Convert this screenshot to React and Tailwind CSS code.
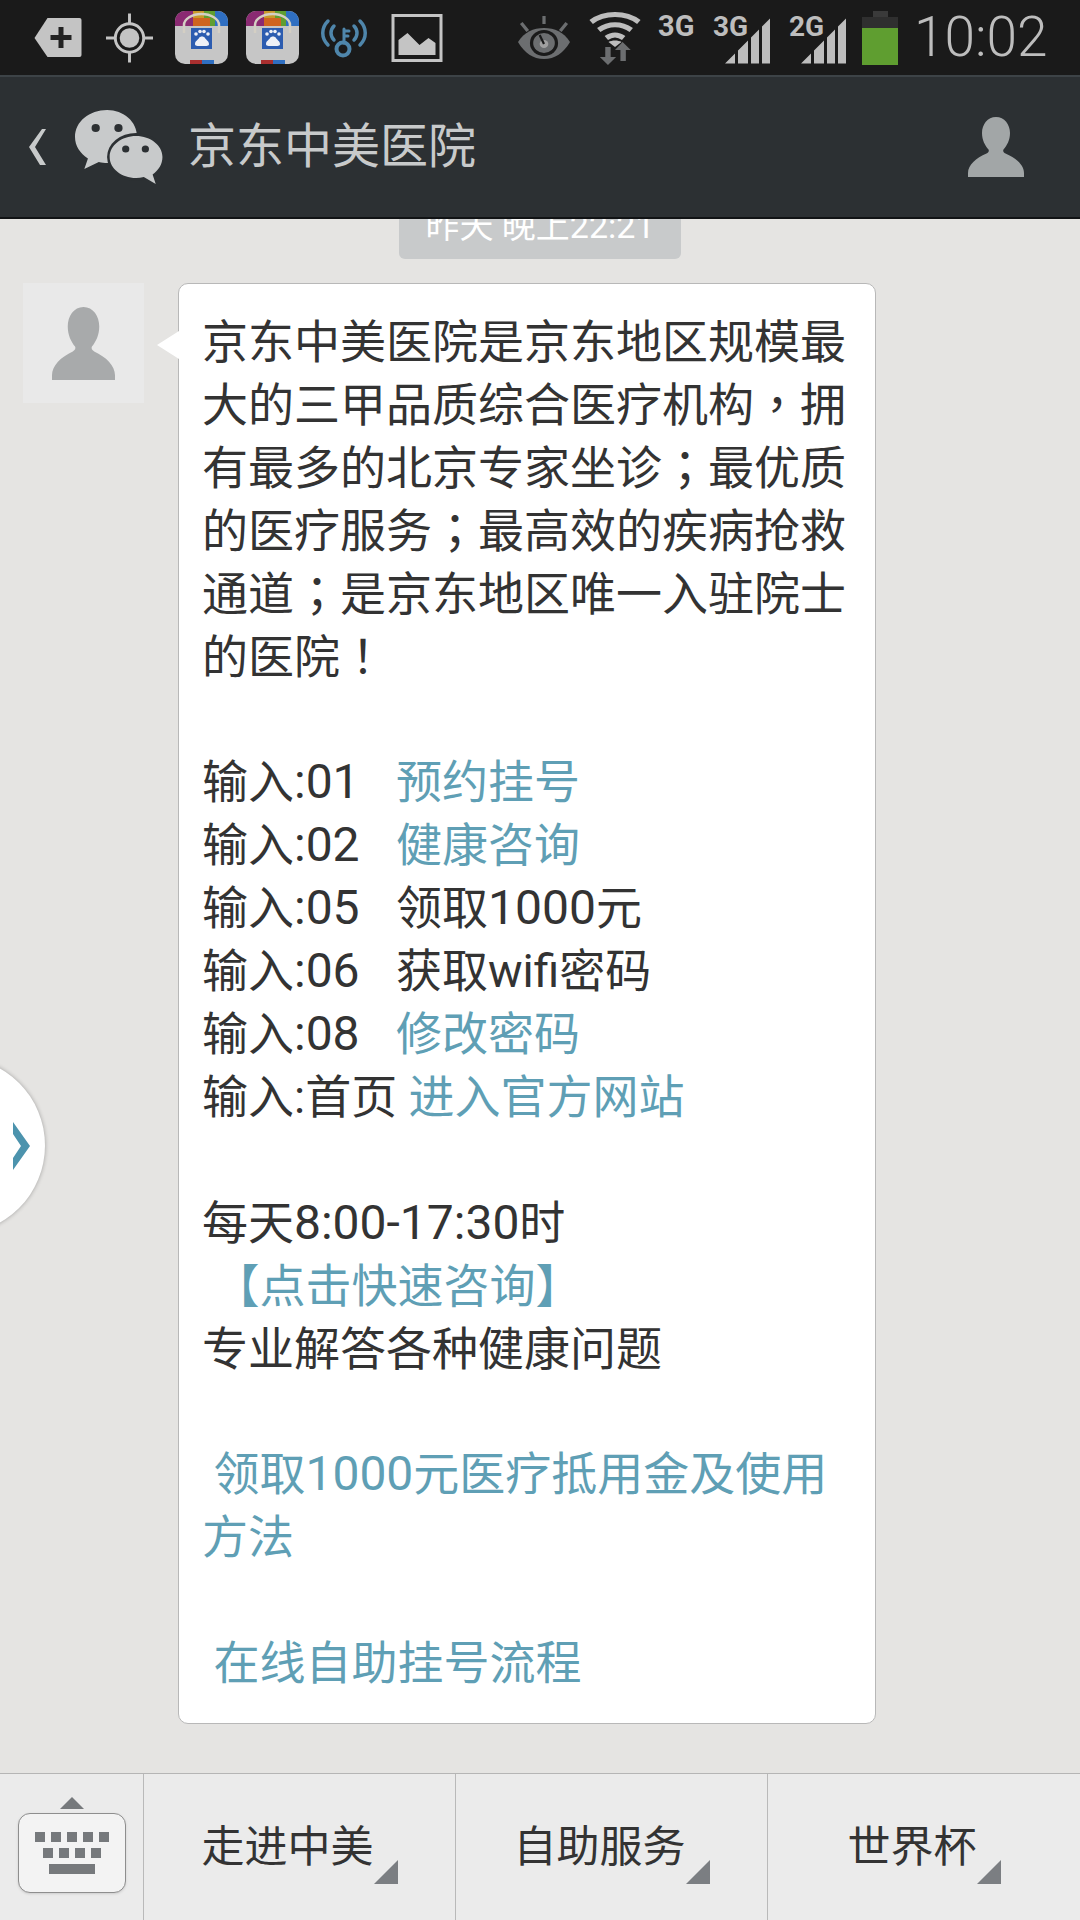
import React from 'react';

const PersonIcon = ({ className, fill }) => (
  <svg viewBox="0 0 56 60" preserveAspectRatio="none" className={className}>
    <path
      fill={fill}
      d="M28 0c8.500 0 14 7.500 14 16 0 7-3 12.500-6.500 16.500-.8 1.500 0 3 2 4C48 41 56 48 56 56v4H0v-4c0-8 8-15 18.500-19.500 2-1 2.800-2.500 2-4C17 28.500 14 23 14 16 14 7.500 19.500 0 28 0z"
    />
  </svg>
);

const WeChatLogo = () => (
  <svg viewBox="0 0 86 74" preserveAspectRatio="none" className="w-[89px] h-[74px] ml-[28px]">
    <path fill="#c8cacb" d="M31 0C14 0 0 11.500 0 27c0 9 5 16.500 12.500 21.500L9 59l14-7c3 .8 5.500 1 8 1 2 0 3 0 5-.5C53 50 60 38 60 27 60 11.500 47 0 31 0z" />
    <ellipse cx="59" cy="47" rx="28" ry="24" fill="#2c3033" />
    <path fill="#c8cacb" d="M59 26c-14 0-25.500 9.500-25.500 21S45 68 59 68c2.500 0 5-.4 7.500-1L78 74l-3-9.500C81 60 84.500 54 84.500 47 84.500 35.500 73 26 59 26z" />
    <circle cx="20" cy="18" r="4" fill="#2c3033" />
    <circle cx="42" cy="18" r="4" fill="#2c3033" />
    <circle cx="49" cy="39" r="3.500" fill="#2c3033" />
    <circle cx="68" cy="39" r="3.500" fill="#2c3033" />
  </svg>
);

const BaiduBag = ({ className }) => (
  <svg viewBox="0 0 53 53" className={className}>
    <rect width="53" height="53" rx="10" fill="#c6c6c6" />
    <path d="M0 15v-5A10 10 0 0 1 10 0h8v15z" fill="#8a2a72" />
    <path d="M18 0h11v15H18z" fill="#c99a2a" />
    <path d="M29 0h11v15H29z" fill="#5f9e30" />
    <path d="M40 0h3a10 10 0 0 1 10 10v5H40z" fill="#2f6fc2" />
    <path d="M18 7h17v8H18z" fill="#cf6420" />
    <path d="M9 22v-8C9 8 17 3 26.500 3S44 8 44 14v8" fill="none" stroke="#d4cfc4" strokeWidth="2.500" />
    <path d="M15 49h12v4H15z" fill="#a92f2f" />
    <path d="M27 49h12v4H27z" fill="#2f6fc2" />
    <rect x="16" y="17" width="21" height="21" fill="#2c5cb0" />
    <g fill="#eef0f6">
      <circle cx="21" cy="23" r="1.800" />
      <circle cx="25" cy="20.500" r="1.800" />
      <circle cx="29" cy="20.500" r="1.800" />
      <circle cx="33" cy="23" r="1.800" />
      <path d="M20 33c0-3 3-4 4-6 1-2 5-2 6 0 1 2 4 3 4 6 0 2-2 2-7 2s-7 0-7-2z" />
    </g>
  </svg>
);

const SignalBars = ({ label, className }) => (
  <div className={`relative w-[58px] h-[48px] ${className}`}>
    <svg viewBox="0 0 58 47" className="absolute left-0 top-0 w-[58px] h-[48px]">
      <path fill="#bdbdbd" d="M0 47 10 37v10zM13 47V34l10-10v23zM26 47V21l8-8v34zM37 47V10l8-8v45z" transform="translate(12 0)" />
    </svg>
    <span className="absolute left-0 top-[-5px] text-[28px] leading-[32px] font-bold text-[#bdbdbd] font-[Roboto,sans-serif]">
      {label}
    </span>
  </div>
);

const StatusBar = () => (
  <div className="h-[75px] bg-[#1a1a1a] flex items-center shrink-0">
    {/* notification tag */}
    <svg viewBox="0 0 47 39" className="w-[48px] h-[39px] ml-[34px]">
      <path fill="#c4c4c4" d="M13 0h32a2 2 0 0 1 2 2v35a2 2 0 0 1-2 2H13L0 20z" />
      <path fill="#222" d="M24 9h5v8h8v5h-8v8h-5v-8h-8v-5h8z" />
    </svg>
    {/* gps */}
    <svg viewBox="0 0 48 50" className="w-[47px] h-[50px] ml-[24px]">
      <circle cx="24" cy="25" r="14.500" fill="none" stroke="#c4c4c4" strokeWidth="3" />
      <circle cx="24" cy="25" r="10" fill="#c4c4c4" />
      <path stroke="#c4c4c4" strokeWidth="3" d="M24 0v10M24 40v10M0 25h10M38 25h10" />
    </svg>
    <BaiduBag className="w-[53px] h-[53px] ml-[22px]" />
    <BaiduBag className="w-[53px] h-[53px] ml-[18px]" />
    {/* wifi key */}
    <svg viewBox="0 0 46 40" className="w-[46px] h-[40px] ml-[22px]">
      <g fill="none" stroke="#4f86ab" strokeWidth="3.500" strokeLinecap="round">
        <path d="M7 3C0 10 0 20 7 27M39 3c7 7 7 17 0 24M13 8c-4 4-4 10 0 14M33 8c4 4 4 10 0 14" />
        <circle cx="22" cy="31" r="6.500" strokeWidth="4" />
        <path d="M23 25V11M23 13h5M23 18h4" strokeWidth="3" />
      </g>
    </svg>
    {/* picture */}
    <svg viewBox="0 0 51 48" className="w-[52px] h-[48px] ml-[24px]">
      <rect x="1.500" y="1.500" width="48" height="45" fill="none" stroke="#c4c4c4" strokeWidth="3" />
      <path fill="#c4c4c4" d="M7 41V26l9-7 12 12 9-7 7 5v12z" />
    </svg>
    {/* eye */}
    <svg viewBox="0 0 48 44" preserveAspectRatio="none" className="w-[52px] h-[44px] ml-[75px]">
      <path fill="#6c6e70" d="M0 26C6 16 14 12 24 12s18 4 24 14c-6 11-14 17-24 17S6 37 0 26z" />
      <circle cx="24" cy="27" r="13" fill="#1a1a1a" />
      <circle cx="24" cy="27" r="10" fill="#6c6e70" />
      <circle cx="24" cy="28" r="4" fill="#a0a0a0" />
      <path stroke="#6c6e70" strokeWidth="3" d="M24 0v8M3 7l6 8M45 7l-6 8" />
      <path stroke="#1a1a1a" strokeWidth="2" d="M24 28l-4-9" />
    </svg>
    {/* wifi with arrows */}
    <svg viewBox="0 0 48 54" preserveAspectRatio="none" className="w-[52px] h-[54px] ml-[19px]">
      <g fill="none" stroke="#bdbdbd" strokeWidth="5">
        <path d="M2 11C14 1 34 1 46 11" />
        <path d="M9 19c9-7 21-7 30 0" />
        <path d="M16 27c5-4 11-4 16 0" />
      </g>
      <path fill="#bdbdbd" d="M24 36l-6-5c3-2 9-2 12 0z" />
      <path fill="#6c6e70" d="M15 36h5v10h5l-7.500 8L10 46h5zM31 31l7.500 8H34v11h-5V39h-5z" />
    </svg>
    <span className="w-[36px] text-[29px] leading-[30px] font-bold text-[#bdbdbd] ml-[17px] mb-[24px] font-[Roboto,sans-serif]">
      3G
    </span>
    <SignalBars label="3G" className="ml-[19px] mt-[4px]" />
    <SignalBars label="2G" className="ml-[18px] mt-[4px]" />
    {/* battery */}
    <div className="w-[36px] h-[54px] ml-[15px] flex flex-col items-center">
      <div className="w-[15px] h-[6px] bg-[#3a3a3a]" />
      <div className="w-[36px] h-[11px] bg-[#2f2f2f]" />
      <div className="w-[36px] h-[37px] bg-[#5f9e30]" />
    </div>
    <span className="text-[55px] leading-[75px] font-light text-[#bdbdbd] ml-[16px] font-[Roboto,sans-serif]">
      10:02
    </span>
  </div>
);

const Header = () => (
  <div className="h-[144px] bg-[#2c3033] border-t-2 border-t-[#3d4347] border-b-2 border-b-[#111315] flex items-center shrink-0">
    <svg viewBox="0 0 18 36" className="w-[18px] h-[36px] ml-[29px]">
      <path fill="#c8cacb" d="M13 0h4L6 18l11 18h-6L0 18z" />
    </svg>
    <WeChatLogo />
    <span className="text-[48px] leading-[56px] text-[#c8cacb] ml-[24px] font-[Roboto,'Noto_Sans_CJK_SC',sans-serif]">
      京东中美医院
    </span>
    <div className="flex-1" />
    <PersonIcon className="w-[56px] h-[60px] mr-[56px]" fill="#a2a6a7" />
  </div>
);

const Link = ({ children }) => <span className="text-[#5f9fb5]">{children}</span>;

// the phone's fallback font centres its punctuation, the TC cut does too
const Punct = ({ children }) => <span className="font-['Noto_Sans_CJK_TC'] leading-none">{children}</span>;

// latin digits run a little larger than the CJK text in the reference
const Num = ({ children }) => <span className="text-[48px] leading-none">{children}</span>;

const Label = ({ children }) => <span className="inline-block w-[194px]">{children}</span>;

const Bubble = () => (
  <div className="relative w-[698px] ml-[34px] bg-white border border-[#b8b8b8] rounded-[10px] pl-[23px] pr-[18px] pt-[27px] pb-[28px] text-[46px] leading-[62.900px] text-[#333333] whitespace-pre font-[Roboto,'Noto_Sans_CJK_SC',sans-serif]">
    <svg viewBox="0 0 22 28" className="absolute left-[-22px] top-[47px] w-[22px] h-[28px]">
      <path fill="#ffffff" d="M22 0v28L0 14z" />
    </svg>
    <div>京东中美医院是京东地区规模最</div>
    <div>大的三甲品质综合医疗机构<Punct>，</Punct>拥</div>
    <div>有最多的北京专家坐诊<Punct>；</Punct>最优质</div>
    <div>的医疗服务<Punct>；</Punct>最高效的疾病抢救</div>
    <div>通道<Punct>；</Punct>是京东地区唯一入驻院士</div>
    <div>的医院<Punct>！</Punct></div>
    <div>{' '}</div>
    <div><Label>输入<Num>:01</Num></Label><Link>预约挂号</Link></div>
    <div><Label>输入<Num>:02</Num></Label><Link>健康咨询</Link></div>
    <div><Label>输入<Num>:05</Num></Label>领取<Num>1000</Num>元</div>
    <div><Label>输入<Num>:06</Num></Label>获取wifi密码</div>
    <div><Label>输入<Num>:08</Num></Label><Link>修改密码</Link></div>
    <div>输入:首页 <Link>进入官方网站</Link></div>
    <div>{' '}</div>
    <div>每天<Num>8:00-17:30</Num>时</div>
    <div><Link> <Punct>【</Punct>点击快速咨询<Punct>】</Punct></Link></div>
    <div>专业解答各种健康问题</div>
    <div>{' '}</div>
    <div><Link> 领取<Num>1000</Num>元医疗抵用金及使用</Link></div>
    <div><Link>方法</Link></div>
    <div>{' '}</div>
    <div><Link> 在线自助挂号流程</Link></div>
  </div>
);

const Triangle = () => (
  <svg viewBox="0 0 24 24" className="w-[24px] h-[24px] mt-[50px] shrink-0">
    <path fill="#7b7e82" d="M24 0v24H0z" />
  </svg>
);

const MenuItem = ({ label, className }) => (
  <div className={`h-full flex items-center justify-center ${className}`}>
    <span className="text-[43px] leading-[50px] text-[#333333] font-[Roboto,'Noto_Sans_CJK_SC',sans-serif]">{label}</span>
    <Triangle />
  </div>
);

const BottomBar = () => (
  <div className="h-[147px] shrink-0 bg-[#ebebeb] border-t border-t-[#b5b5b5] flex">
    <div className="w-[144px] h-full border-r border-r-[#b9b9b9] flex flex-col items-center pt-[23px] shrink-0">
      <svg viewBox="0 0 24 12" className="w-[24px] h-[12px]">
        <path fill="#76797c" d="M12 0l12 12H0z" />
      </svg>
      <div className="w-[108px] h-[80px] mt-[4px] bg-[#f3f3f3] border border-[#8e8e8e] rounded-[12px] shadow-sm flex flex-col items-center justify-center gap-[6px]">
        <div className="flex gap-[6px]">
          {[1, 2, 3, 4, 5].map((n) => (
            <div key={n} className="w-[10px] h-[10px] bg-[#76797c]" />
          ))}
        </div>
        <div className="flex gap-[6px]">
          {[1, 2, 3, 4].map((n) => (
            <div key={n} className="w-[10px] h-[10px] bg-[#76797c]" />
          ))}
        </div>
        <div className="w-[46px] h-[10px] bg-[#76797c]" />
      </div>
    </div>
    <MenuItem label="走进中美" className="w-[312px] border-r border-r-[#b9b9b9]" />
    <MenuItem label="自助服务" className="w-[312px] border-r border-r-[#b9b9b9]" />
    <MenuItem label="世界杯" className="flex-1" />
  </div>
);

export default function App() {
  return (
    <div className="w-[1080px] h-[1920px] relative overflow-hidden flex flex-col bg-[#e5e4e2]">
      <StatusBar />
      <Header />
      <div className="flex-1 overflow-hidden">
        <div className="flex justify-center -mt-[12px]">
          <div className="w-[282px] h-[52px] bg-[#c8cacb] rounded-[6px] text-[34px] leading-[38px] text-white text-center font-[Roboto,'Noto_Sans_CJK_SC',sans-serif]">
            昨天 晚上22:21
          </div>
        </div>
        <div className="flex items-start mt-[24px] ml-[23px]">
          <div className="w-[121px] h-[120px] bg-[#e9e9e9] flex items-center justify-center shrink-0">
            <PersonIcon className="w-[63px] h-[73px]" fill="#a8aaab" />
          </div>
          <Bubble />
        </div>
      </div>
      <BottomBar />
      {/* floating side tab */}
      <div className="absolute left-[-132px] top-[1057px] w-[177px] h-[177px] rounded-full bg-white shadow-[0_0_4px_rgba(0,0,0,0.3)] flex items-center justify-end pr-[15px]">
        <svg viewBox="0 0 17 48" className="w-[17px] h-[50px]">
          <path fill="#4c93ad" d="M0 0l17 24L0 48V36l8-12L0 12z" />
        </svg>
      </div>
    </div>
  );
}
